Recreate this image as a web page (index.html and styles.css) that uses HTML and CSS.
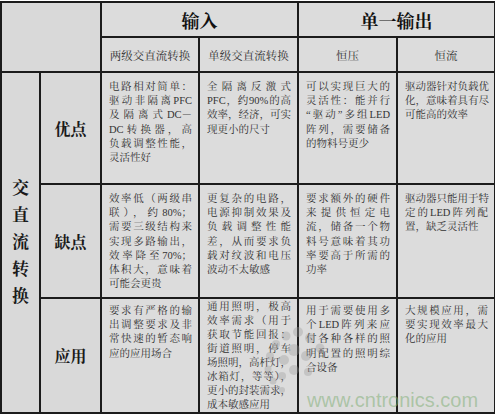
FILE: index.html
```html
<!DOCTYPE html>
<html lang="zh">
<head>
<meta charset="utf-8">
<title>交直流转换</title>
<link rel="stylesheet" href="styles.css">
</head>
<body>
<div class="wrap">
<table class="grid">
<colgroup>
<col class="c0"><col class="c1"><col class="c2"><col class="c3"><col class="c4"><col class="c5">
</colgroup>
<tr class="h1">
  <td class="blank" colspan="2" rowspan="2"></td>
  <th class="big" colspan="2">输入</th>
  <th class="big" colspan="2">单一输出</th>
</tr>
<tr class="h2">
  <th class="sub">两级交直流转换</th>
  <th class="sub">单级交直流转换</th>
  <th class="sub">恒压</th>
  <th class="sub">恒流</th>
</tr>
<tr class="r1">
  <td class="vert" rowspan="3">交<br>直<br>流<br>转<br>换</td>
  <td class="lab">优点</td>
  <td class="txt">
    <div class="l">电路相对简单：</div>
    <div class="l">驱动非隔离PFC</div>
    <div class="l">及隔离式DC－</div>
    <div class="l">DC转换器，高</div>
    <div class="l">负载调整性能，</div>
    <div class="l e">灵活性好</div>
  </td>
  <td class="txt">
    <div class="l">全隔离反激式</div>
    <div class="l">PFC，约90%的高</div>
    <div class="l">效率，经济，可实</div>
    <div class="l e">现更小的尺寸</div>
  </td>
  <td class="txt">
    <div class="l">可以实现巨大的</div>
    <div class="l">灵活性：能并行</div>
    <div class="l">“驱动”多组LED</div>
    <div class="l">阵列，需要储备</div>
    <div class="l e">的物料号更少</div>
  </td>
  <td class="txt t4">
    <div class="l">驱动器针对负载优</div>
    <div class="l">化，意味着具有尽</div>
    <div class="l e">可能高的效率</div>
  </td>
</tr>
<tr class="r2">
  <td class="lab">缺点</td>
  <td class="txt">
    <div class="l">效率低（两级串</div>
    <div class="l">联），约80%；</div>
    <div class="l">需要三级结构来</div>
    <div class="l">实现多路输出，</div>
    <div class="l">效率降至70%；</div>
    <div class="l">体积大，意味着</div>
    <div class="l e">可能会更贵</div>
  </td>
  <td class="txt">
    <div class="l">更复杂的电路，</div>
    <div class="l">电源抑制效果及</div>
    <div class="l">负载调整性能</div>
    <div class="l">差，从而要求负</div>
    <div class="l">载对纹波和电压</div>
    <div class="l e">波动不太敏感</div>
  </td>
  <td class="txt">
    <div class="l">要求额外的硬件</div>
    <div class="l">来提供恒定电</div>
    <div class="l">流，储备一个物</div>
    <div class="l">料号意味着其功</div>
    <div class="l">率要高于所需的</div>
    <div class="l e">功率</div>
  </td>
  <td class="txt t4">
    <div class="l">驱动器只能用于特</div>
    <div class="l">定的LED阵列配</div>
    <div class="l e">置，缺乏灵活性</div>
  </td>
</tr>
<tr class="r3">
  <td class="lab">应用</td>
  <td class="txt">
    <div class="l">要求有严格的输</div>
    <div class="l">出调整要求及非</div>
    <div class="l">常快速的暂态响</div>
    <div class="l e">应的应用场合</div>
  </td>
  <td class="txt tight">
    <div class="l">通用照明，极高</div>
    <div class="l">效率需求（用于</div>
    <div class="l">获取节能回报：</div>
    <div class="l">街道照明，停车</div>
    <div class="l">场照明，高杆灯，</div>
    <div class="l">冰箱灯，等等），</div>
    <div class="l">更小的封装需求，</div>
    <div class="l e">成本敏感应用</div>
  </td>
  <td class="txt">
    <div class="l">用于需要使用多</div>
    <div class="l">个LED阵列来应</div>
    <div class="l">付各种各样的照</div>
    <div class="l">明配置的照明综</div>
    <div class="l e">合设备</div>
  </td>
  <td class="txt">
    <div class="l">大规模应用，需</div>
    <div class="l">要实现效率最大</div>
    <div class="l e">化的应用</div>
  </td>
</tr>
</table>
<svg class="dots" width="90" height="80" viewBox="0 0 90 80" aria-hidden="true">
  <g fill="#9a9a9a" opacity="0.35">
    <circle cx="50" cy="10" r="5"/><circle cx="62" cy="16" r="5"/><circle cx="72" cy="26" r="4.5"/>
    <circle cx="38" cy="14" r="4.5"/><circle cx="28" cy="22" r="4"/><circle cx="22" cy="34" r="4"/>
    <circle cx="20" cy="47" r="3.5"/><circle cx="25" cy="59" r="3.5"/><circle cx="34" cy="68" r="3"/>
    <circle cx="46" cy="28" r="6"/><circle cx="58" cy="34" r="5"/><circle cx="36" cy="38" r="5"/>
    <circle cx="46" cy="48" r="5"/><circle cx="34" cy="54" r="4"/><circle cx="60" cy="50" r="4"/>
  </g>
</svg>
<div class="mark">www.cntronics.com</div>
</div>
</body>
</html>
```

FILE: styles.css
```css
html, body {
  margin: 0;
  padding: 0;
  background: #ffffff;
}

.wrap {
  position: relative;
  width: 495px;
  height: 416px;
  padding-top: 1px;
  box-sizing: border-box;
  overflow: hidden;
}

.grid {
  border-collapse: collapse;
  table-layout: fixed;
  width: 494px;
  font-family: "Liberation Serif", "Noto Serif CJK SC", "Noto Sans CJK SC", serif;
  color: #2a2a2a;
}

.c0 { width: 39px; }
.c1 { width: 61px; }
.c2 { width: 98px; }
.c3 { width: 99px; }
.c4 { width: 99px; }
.c5 { width: 98px; }

.grid td, .grid th {
  border: 2px solid #1c1c1c;
  background: #dcdcdc;
  padding: 0;
}

.h1 { height: 35px; }
.h2 { height: 35px; }
.r1 { height: 112px; }
.r2 { height: 114px; }
.r3 { height: 115px; }

.big {
  font-size: 18px;
  font-weight: bold;
  color: #111;
  text-align: center;
  vertical-align: middle;
}

.sub {
  font-size: 11.5px;
  font-weight: normal;
  color: #333;
  text-align: center;
  vertical-align: middle;
  padding-top: 2px;
}

.vert {
  font-size: 17px;
  font-weight: bold;
  color: #1a1a1a;
  line-height: 27px;
  text-align: center;
  vertical-align: middle;
  padding-top: 10px;
}

.grid td.vert, .grid td.lab, .grid td.blank {
  background: #d9d9d9;
}

.lab {
  font-size: 16px;
  font-weight: bold;
  color: #1a1a1a;
  text-align: center;
  vertical-align: middle;
}

.txt {
  vertical-align: top;
  font-size: 10.5px;
  line-height: 14.2px;
  color: #333;
}

.grid td.txt {
  padding: 7px 6px 0 7px;
}

.grid .r3 td.txt {
  padding-top: 5px;
}

.grid .r3 td.tight {
  padding-top: 1px;
  line-height: 14px;
}

.l {
  white-space: nowrap;
  text-align: justify;
  text-align-last: justify;
}

.l.e {
  text-align-last: left;
}

.dots {
  position: absolute;
  left: 248px;
  top: 322px;
}

.mark {
  position: absolute;
  left: 307px;
  top: 389px;
  font-family: "Liberation Sans", Arial, sans-serif;
  font-size: 20px;
  color: rgba(130, 175, 120, 0.55);
}
```
